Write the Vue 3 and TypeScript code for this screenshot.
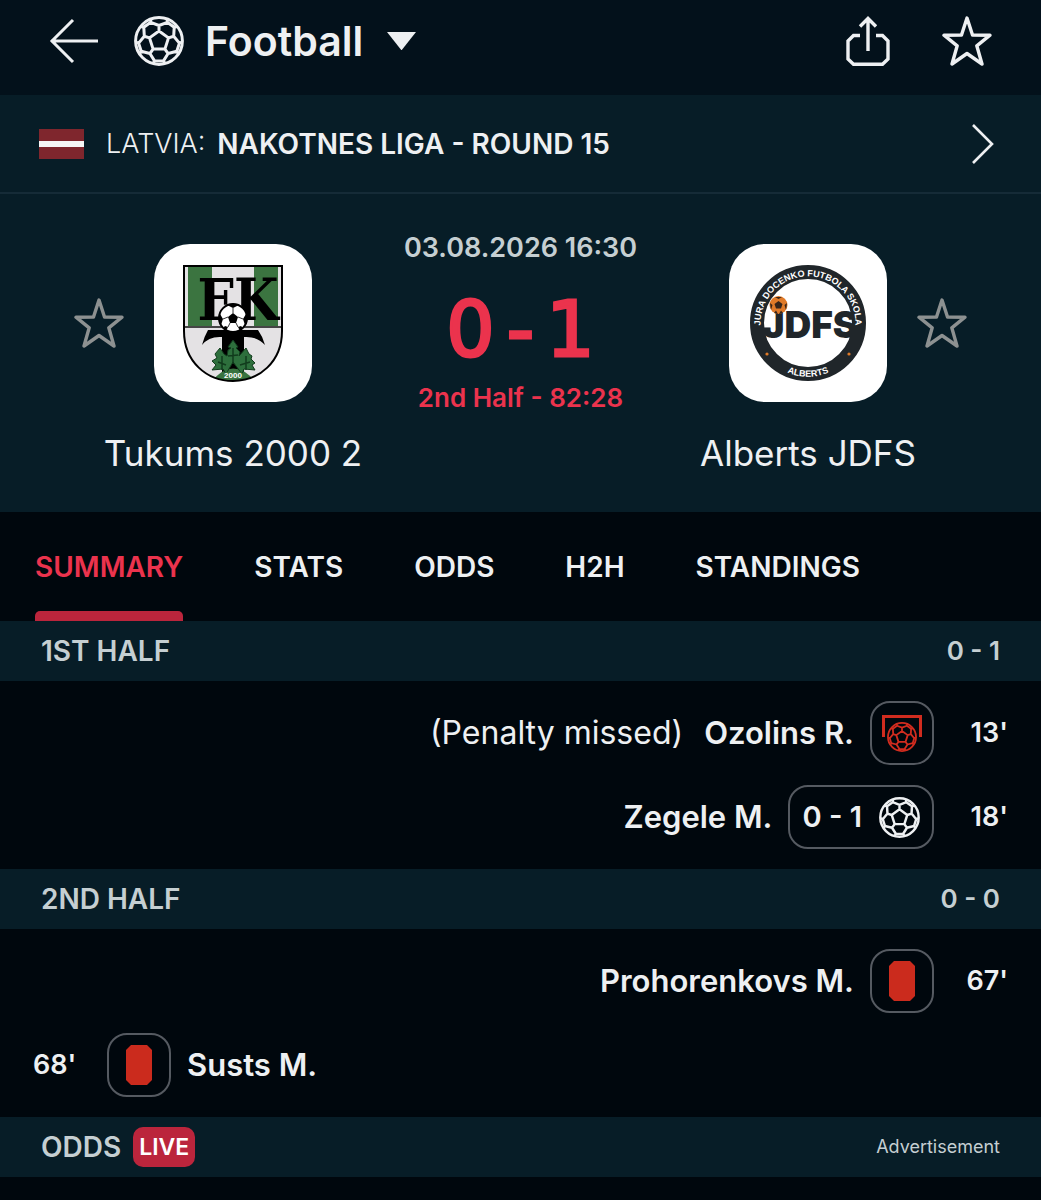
<script setup lang="ts">
import { computed, defineComponent, h, ref } from 'vue'

interface MatchEvent {
  side: 'home' | 'away'
  minute: string
  player: string
  kind: 'goal' | 'red' | 'missed'
  note?: string
  score?: string
}

interface Period {
  title: string
  score: string
  events: MatchEvent[]
}

const tabs = ['SUMMARY', 'STATS', 'ODDS', 'H2H', 'STANDINGS']
const activeTab = ref('SUMMARY')

const periods: Period[] = [
  {
    title: '1ST HALF',
    score: '0 - 1',
    events: [
      { side: 'away', minute: "13'", player: 'Ozolins R.', kind: 'missed', note: '(Penalty missed)' },
      { side: 'away', minute: "18'", player: 'Zegele M.', kind: 'goal', score: '0 - 1' },
    ],
  },
  {
    title: '2ND HALF',
    score: '0 - 0',
    events: [
      { side: 'away', minute: "67'", player: 'Prohorenkovs M.', kind: 'red' },
      { side: 'home', minute: "68'", player: 'Susts M.', kind: 'red' },
    ],
  },
]

/* Seams of the ball: a centre pentagon, five spokes and five panels cut by the rim. */
const seams = computed(() => {
  const at = (radius: number, degrees: number) => {
    const a = (degrees * Math.PI) / 180
    return `${(25 + radius * Math.cos(a)).toFixed(1)} ${(25 + radius * Math.sin(a)).toFixed(1)}`
  }
  let d = ''
  for (let k = 0; k < 5; k++) {
    const t = -90 + 72 * k
    d += `M${at(10, t)}L${at(10, t + 72)}`
    d += `M${at(10, t)}L${at(15.5, t)}`
    d += `M${at(23, t - 21)}L${at(20.5, t - 24)}L${at(15.5, t)}L${at(20.5, t + 24)}L${at(23, t + 21)}`
    d += `M${at(20.5, t + 24)}L${at(20.5, t + 48)}`
  }
  return d
})

const BallIcon = defineComponent({
  setup() {
    return () =>
      h('svg', { viewBox: '0 0 50 50', fill: 'none', stroke: 'currentColor', 'stroke-width': 3, 'stroke-linejoin': 'round', 'aria-hidden': 'true' }, [
        h('circle', { cx: 25, cy: 25, r: 23.4 }),
        h('path', { d: seams.value }),
      ])
  },
})

const StarIcon = defineComponent({
  setup() {
    return () =>
      h('svg', { viewBox: '0 0 50 50', fill: 'none', stroke: 'currentColor', 'stroke-width': 3.4, 'stroke-linejoin': 'round', 'aria-hidden': 'true' }, [
        h('path', { d: 'M25 2 L30.500 19 L48 19.200 L34.800 29.800 L40 48 L25 37.500 L10 48 L15.200 29.800 L2 19.200 L19.500 19 Z' }),
      ])
  },
})
</script>

<template>
  <div class="app">
    <header class="topbar">
      <button class="icon-btn back" aria-label="Back">
        <svg viewBox="0 0 50 46" fill="none" stroke="currentColor" stroke-width="3"><path d="M24 2 L3 23 L24 44 M2 23 H49" /></svg>
      </button>
      <button class="sport">
        <BallIcon class="sport-ball" />
        <span>Football</span>
        <svg class="caret" viewBox="0 0 30 19"><path d="M0 0 H30 L15 19 Z" fill="currentColor" /></svg>
      </button>
      <button class="icon-btn share" aria-label="Share">
        <svg viewBox="0 0 44 50" fill="none" stroke="currentColor" stroke-width="3.400">
          <path d="M14 19.500 H7.500 L2 25 V43 L7.500 48.300 H36.500 L42 43 V25 L36.500 19.500 H30 M22 35 V3 M14 10.500 L22 2.500 L30 10.500" />
        </svg>
      </button>
      <button class="icon-btn star" aria-label="Add to favourites"><StarIcon /></button>
    </header>

    <a class="league" href="#league">
      <svg class="flag" viewBox="0 0 45 30"><path fill="#7f262d" d="M0 0H45V30H0Z" /><path fill="#f6f6f6" d="M0 12H45V18H0Z" /></svg>
      <span>LATVIA: </span>
      <strong>NAKOTNES LIGA - ROUND 15</strong>
      <svg class="chevron" viewBox="0 0 22 40" fill="none" stroke="currentColor" stroke-width="2.600"><path d="M1 1 L20 20 L1 39" /></svg>
    </a>

    <section class="match">
      <div class="team">
        <button class="icon-btn star dim" aria-label="Follow Tukums 2000 2"><StarIcon /></button>
        <div class="side">
          <div class="crest">
            <svg viewBox="0 0 158 158" role="img" aria-label="Tukums 2000 2 crest">
              <defs>
                <clipPath id="shield"><path d="M30 22 H128 V87 C128 118 105 137 79 137 C53 137 30 118 30 87 Z" /></clipPath>
              </defs>
              <g clip-path="url(#shield)">
                <path fill="#e4e2e4" d="M30 22H128V137H30Z" />
                <path fill="#3b7440" d="M34 22H58V82H34ZM100 22H124V82H100Z" />
                <path stroke="#111" stroke-width="1.500" d="M30 83H128" />
                <path fill="#000" d="M54 86 H104 Q109 93 111 101 Q103 92 90 93 V128 H68 V93 Q55 92 48 101 Q50 93 54 86Z" />
                <path fill="#38733f" d="M58 137 Q79 112 101 137Z" />
                <path fill="#2d6f3c" stroke="#113b1c" stroke-width="1" d="M66 104 L70 110 L73 112 L74 106 L77 104 L74 103 L79 96 L84 103 L82 104 L86 108 L85 112 L92 104 L95 110 L98 112 L97 115 L101 119 L98 121 L101 126 L90 125 L88 130 L79 118 L72 130 L69 125 L58 126 L62 121 L58 117 L63 114 L61 110 Z" />
                <path stroke="#113b1c" stroke-width="1.500" fill="none" d="M79 104V120M68 112V126M92 112V126M64 118L72 121M86 121L96 118M74 112L84 111" />
                <path fill="#38733f" d="M60 138 Q79 115 99 138Z" />
              </g>
              <text class="crest-fk" x="84" y="76" text-anchor="middle">FK</text>
              <circle cx="79" cy="74" r="14" fill="#fff" stroke="#000" stroke-width="2" />
              <path fill="#000" d="M79 69 L84 73 L82 79 H76 L74 73 Z M73 61 L79 64 L85 61 L79 59.500Z M92 70 L89 75 L91 81 L93.500 75Z M66 70 L69 75 L67 81 L64.500 75Z M72 87 L74 83 L71 82 L69 84Z M86 87 L84 83 L87 82 L89 84Z" />
              <path fill="none" stroke="#333" d="M79 69 V64 M84 73 L89 75 M82 79 L84 83 M76 79 L74 83 M74 73 L69 75" />
              <path fill="none" stroke="#000" stroke-width="2" d="M30 22 H128 V87 C128 118 105 137 79 137 C53 137 30 118 30 87 Z" />
              <text class="crest-year" x="79" y="134" text-anchor="middle">2000</text>
            </svg>
          </div>
          <h2>Tukums 2000 2</h2>
        </div>
      </div>

      <div class="state">
        <time datetime="2026-08-03T16:30">03.08.2026 16:30</time>
        <p class="score"><span>0</span><span>-</span><span>1</span></p>
        <p class="clock">2nd Half - 82:28</p>
      </div>

      <div class="team">
        <div class="side">
          <div class="crest">
            <svg viewBox="0 0 158 158" role="img" aria-label="Alberts JDFS crest">
              <defs>
                <path id="ring-top" d="M34.700 97 A47.500 47.500 0 1 1 123.300 97" />
                <path id="ring-foot" d="M35 110 A54 54 0 0 0 123 110" />
              </defs>
              <circle cx="79" cy="79" r="51" fill="#fff" stroke="#20262a" stroke-width="14" />
              <text class="crest-jdfs" x="81" y="94" text-anchor="middle">JDFS</text>
              <text class="crest-ring"><textPath href="#ring-top" startOffset="50%" text-anchor="middle">JURA DOCENKO FUTBOLA SKOLA</textPath></text>
              <text class="crest-ring"><textPath href="#ring-foot" startOffset="50%" text-anchor="middle">ALBERTS</textPath></text>
              <circle cx="49.500" cy="61" r="9" fill="#e07a28" />
              <path fill="#35251b" d="M49.500 57 L53.500 60 L52 64.500 H47 L45.500 60Z M46 53 H53 L49.500 55Z M41 59 L43.500 61 L42 66Z M58 59 L55.500 61 L57 66Z M45 69 L47 66.500 L49 70Z M54 69 L52 66.500 L50 70Z" />
              <circle cx="38" cy="110" r="1.600" fill="#e07a28" />
              <circle cx="120" cy="110" r="1.600" fill="#e07a28" />
            </svg>
          </div>
          <h2>Alberts JDFS</h2>
        </div>
        <button class="icon-btn star dim" aria-label="Follow Alberts JDFS"><StarIcon /></button>
      </div>
    </section>

    <nav class="tabs">
      <button v-for="tab in tabs" :key="tab" :class="{ active: tab === activeTab }" @click="activeTab = tab">{{ tab }}</button>
    </nav>

    <section v-for="period in periods" :key="period.title">
      <header class="band">
        <h3>{{ period.title }}</h3>
        <span>{{ period.score }}</span>
      </header>
      <ul class="events">
        <li v-for="event in period.events" :key="event.minute" :class="event.side">
          <span class="minute">{{ event.minute }}</span>
          <span class="pill">
            <BallIcon v-if="event.kind === 'goal'" class="goal-ball" />
            <svg v-else-if="event.kind === 'red'" class="card" viewBox="0 0 26 40"><path fill="#cb2b1d" d="M5 0H21L26 5V35L21 40H5L0 35V5Z" /></svg>
            <span v-else class="missed">
              <svg viewBox="0 0 40 22" fill="none" stroke="currentColor" stroke-width="3"><path d="M1.500 22V1.500H38.500V22" /></svg>
              <BallIcon class="missed-ball" />
            </span>
            <b v-if="event.score">{{ event.score }}</b>
          </span>
          <strong>{{ event.player }}</strong>
          <span v-if="event.note" class="note">{{ event.note }}</span>
        </li>
      </ul>
    </section>

    <footer class="band odds">
      <h3>ODDS</h3>
      <span class="live">LIVE</span>
      <small>Advertisement</small>
    </footer>
  </div>
</template>

<style>
body {
  margin: 0;
  background: #00070d;
}
</style>

<style scoped>
.app {
  min-height: 100vh;
  background: #00070d;
  color: #eef0f2;
  font-family: Inter, Roboto, sans-serif;
  font-size: 28px;
  line-height: 32px;
}
button {
  padding: 0;
  border: 0;
  background: none;
  color: inherit;
  font: inherit;
  cursor: pointer;
}
svg {
  display: block;
}
h2,
h3,
p,
ul {
  margin: 0;
  padding: 0;
  font: inherit;
  list-style: none;
}
.icon-btn {
  flex: none;
}
.topbar {
  display: flex;
  align-items: center;
  height: 82px;
  padding: 0 49px 13px;
  background: #03111b;
}
.back {
  width: 50px;
  margin-right: 35px;
}
.sport {
  display: flex;
  align-items: center;
  margin-right: auto;
  font-size: 41px;
  font-weight: 600;
  line-height: 48px;
}
.sport-ball {
  width: 50px;
  margin-right: 21px;
}
.caret {
  width: 29px;
  margin-left: 24px;
}
.share {
  width: 44px;
  margin-right: 52px;
}
.star {
  width: 50px;
}
.dim {
  color: #8d9191;
}
.league {
  display: flex;
  align-items: center;
  height: 97px;
  padding: 0 47px 0 39px;
  border-bottom: 2px solid #152b37;
  background: #071d27;
  color: inherit;
  text-decoration: none;
}
.flag {
  width: 45px;
  margin-right: 22px;
}
.league span {
  font-size: 27px;
  font-weight: 300;
}
.league strong {
  margin-left: 12px;
  font-weight: 600;
}
.chevron {
  width: 22px;
  margin-left: auto;
}
.match {
  display: flex;
  align-items: flex-start;
  justify-content: space-between;
  padding: 38px 74px 37px;
  background: #071d27;
}
.team {
  display: flex;
  align-items: flex-start;
  gap: 30px;
  padding-top: 12px;
}
.team .star {
  margin-top: 54px;
}
.side {
  display: flex;
  flex-direction: column;
  align-items: center;
  width: 158px;
}
.crest {
  width: 158px;
  border-radius: 36px;
  background: #fff;
}
.side h2 {
  margin-top: 29px;
  font-size: 35px;
  line-height: 44px;
  white-space: nowrap;
}
.crest-fk {
  font: bold 57px "DejaVu Serif Condensed", "Liberation Serif", serif;
}
.crest-year {
  fill: #fff;
  font: bold 8px "Liberation Sans", sans-serif;
}
.crest-ring {
  fill: #fff;
  font: bold 9px "Liberation Sans", sans-serif;
}
.crest-jdfs {
  fill: #20262a;
  font: 900 37px Inter, sans-serif;
}
.state {
  font-size: 27px;
  text-align: center;
}
.state time {
  display: block;
  color: #c5cfd2;
  font-weight: 600;
}
.score {
  display: grid;
  grid-template-columns: repeat(3, 50px);
  justify-content: center;
  margin: 26px 0 12px;
  color: #eb334d;
  font: 76px/80px "DejaVu Sans", sans-serif;
  -webkit-text-stroke: 3px #eb334d;
}
.clock {
  color: #eb334d;
  font-size: 26px;
  font-weight: 600;
}
.tabs {
  display: flex;
  gap: 71px;
  padding: 0 35px;
}
.tabs button {
  display: flex;
  flex-direction: column;
  justify-content: space-between;
  height: 109px;
  padding-top: 39px;
  font-weight: 600;
}
.tabs button::after {
  width: 100%;
  height: 10px;
  border-radius: 5px 5px 0 0;
  content: '';
}
.tabs .active {
  color: #eb334d;
}
.tabs .active::after {
  background: #bb253c;
}
.band {
  display: flex;
  align-items: center;
  justify-content: space-between;
  height: 60px;
  padding: 0 41px;
  background: #071d27;
  color: #c5cfd2;
  font-weight: 600;
}
.band > span {
  font-size: 26px;
}
.events {
  display: flex;
  flex-direction: column;
  gap: 20px;
  padding: 20px 33px 20px;
}
.events li {
  display: flex;
  align-items: center;
  font-size: 31px;
}
.events .away {
  flex-direction: row-reverse;
}
.minute {
  flex: none;
  width: 74px;
  font-size: 27px;
  font-weight: 600;
}
.away .minute {
  text-align: right;
}
.pill {
  box-sizing: border-box;
  display: flex;
  flex-direction: inherit;
  align-items: center;
  justify-content: center;
  gap: 17px;
  min-width: 64px;
  height: 64px;
  padding: 0 12px;
  border: 2px solid #555a61;
  border-radius: 20px;
}
.pill b {
  font-size: 29px;
  font-weight: 600;
}
.goal-ball {
  width: 41px;
}
.card {
  width: 26px;
}
.missed {
  display: grid;
  justify-items: center;
  width: 40px;
  margin: 0 -2px;
  color: #d12c1f;
}
.missed svg {
  grid-area: 1 / 1;
}
.missed-ball {
  width: 30px;
  margin-top: 7px;
}
.events strong {
  margin: 0 16px;
  font-weight: 600;
}
.note {
  margin-right: 5px;
  font-size: 32px;
}
.band .live {
  margin-left: 12px;
  padding: 4px 6px;
  border-radius: 10px;
  background: #bb253c;
  color: #fff;
  font-size: 23px;
}
.odds small {
  margin-left: auto;
  font-size: 18px;
  font-weight: 400;
}
</style>
